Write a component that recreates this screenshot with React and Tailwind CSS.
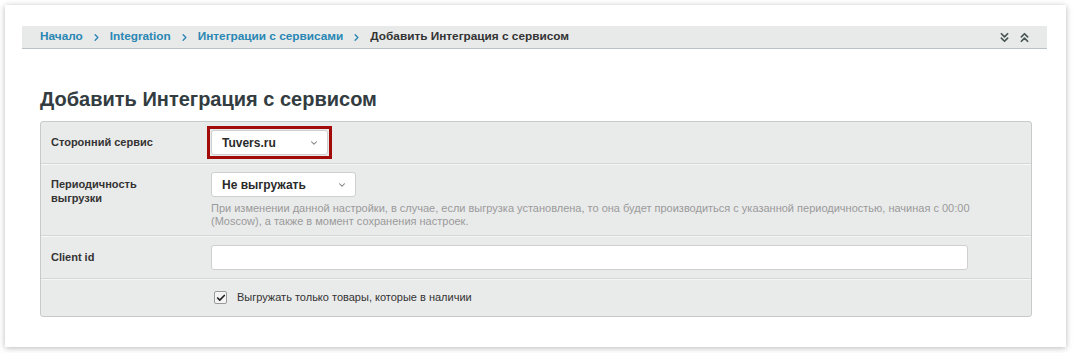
import { ChevronsDown, ChevronsUp, ChevronRight, ChevronDown, Check } from 'lucide-react';

const crumbs = ["Начало", "Integration", "Интеграции с сервисами"];

function Select({ value, width }) {
  return (
    <div className={`flex items-center justify-between h-[25px] bg-white border border-[#cfcfcf] rounded-[3px] pl-[10px] pr-[8px] text-[12px] font-bold text-[#2a2a2a] ${width}`}>
      <span>{value}</span>
      <ChevronDown size={10} strokeWidth={2.5} className="text-[#777]" />
    </div>
  );
}

export default function App() {
  return (
    <div className="min-h-screen bg-white p-[5px] pr-[7px] font-['Liberation_Sans',Arial,sans-serif]">
      <div className="h-[342px] bg-white shadow-[0_1px_6px_rgba(0,0,0,0.28)] pt-[21px] pl-[17px] pr-[19px]">

        {/* breadcrumb bar */}
        <div className="h-[23px] bg-[#e8eaea] border-b border-[#b9c3c5] flex items-center justify-between pl-[18px] pr-[15px]">
          <div className="flex items-center text-[11.8px] font-bold">
            {crumbs.map((c) => (
              <div key={c} className="flex items-center">
                <span className="text-[#2a87b3]">{c}</span>
                <ChevronRight size={11} strokeWidth={3} className="text-[#2a87b3] mx-[8px]" />
              </div>
            ))}
            <span className="text-[#333]">Добавить Интеграция с сервисом</span>
          </div>
          <div className="flex items-center gap-[5px] text-[#4a5656]">
            <ChevronsDown size={15} strokeWidth={2.8} />
            <ChevronsUp size={15} strokeWidth={2.8} />
          </div>
        </div>

        <div className="pl-[18px] pr-[15px]">
          <h1 className="mt-[38px] mb-[10px] text-[20px] leading-[24px] font-bold text-[#333c40]">
            Добавить Интеграция с сервисом
          </h1>

          <div className="bg-[#e9eaea] border border-[#c8c9c9] rounded-[3px] text-[11px] text-[#333]">
            {/* row 1 */}
            <div className="flex items-center h-[42px] border-b border-[#d5d7d7]">
              <div className="w-[170px] pl-[10px] font-bold">Сторонний сервис</div>
              <div className="outline-[3px] outline-solid outline-[#a30b0b] outline-offset-[1px]">
                <Select value="Tuvers.ru" width="w-[117px]" />
              </div>
            </div>

            {/* row 2 */}
            <div className="flex h-[72px] border-b border-[#d5d7d7] shadow-[inset_0_1px_0_#f6f6f6] pt-[8px]">
              <div className="w-[170px] pl-[10px] pt-[5px] font-bold leading-[14px]">
                Периодичность<br />выгрузки
              </div>
              <div className="flex-1">
                <Select value="Не выгружать" width="w-[145px]" />
                <p className="mt-[5px] w-[762px] text-[#9a9a9a] leading-[13px]">
                  При изменении данной настройки, в случае, если выгрузка установлена, то она будет производиться с указанной периодичностью, начиная с 00:00 (Moscow), а также в момент сохранения настроек.
                </p>
              </div>
            </div>

            {/* row 3 */}
            <div className="flex items-center h-[43px] border-b border-[#d5d7d7] shadow-[inset_0_1px_0_#f6f6f6]">
              <div className="w-[170px] pl-[10px] font-bold">Client id</div>
              <div className="w-[757px] h-[25px] bg-white border border-[#cfcfcf] rounded-[3px]" />
            </div>

            {/* row 4 */}
            <div className="flex items-center h-[37px] shadow-[inset_0_1px_0_#f6f6f6] pl-[173px]">
              <div className="w-[13px] h-[13px] bg-[#f4f4f4] border border-[#9a9a9a] rounded-[2px] flex items-center justify-center">
                <Check size={10} strokeWidth={4} className="text-[#222]" />
              </div>
              <span className="ml-[10px]">Выгружать только товары, которые в наличии</span>
            </div>
          </div>
        </div>
      </div>
    </div>
  );
}
